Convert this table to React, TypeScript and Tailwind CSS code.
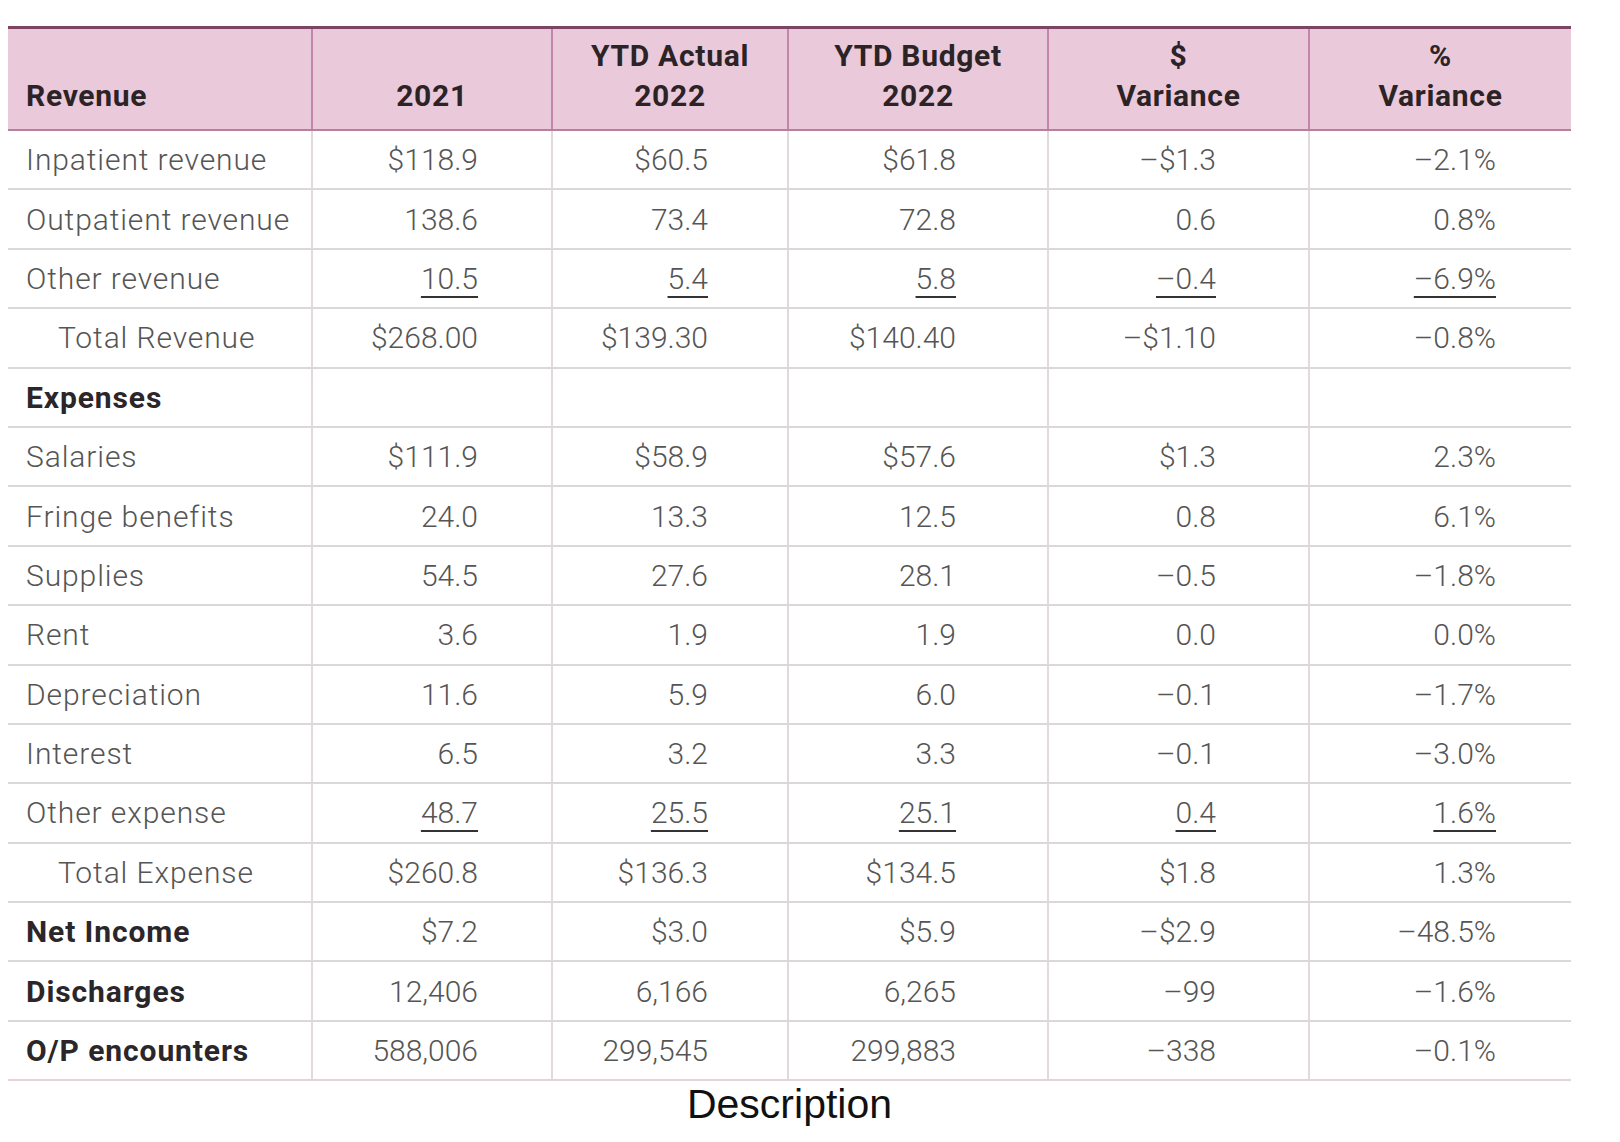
import React from "react";

type Row = {
  label: string;
  kind?: "bold" | "indent";
  vals: string[];
  underline?: boolean;
};

const rows: Row[] = [
  { label: "Inpatient revenue", vals: ["$118.9", "$60.5", "$61.8", "\u2013$1.3", "\u20132.1%"] },
  { label: "Outpatient revenue", vals: ["138.6", "73.4", "72.8", "0.6", "0.8%"] },
  { label: "Other revenue", vals: ["10.5", "5.4", "5.8", "\u20130.4", "\u20136.9%"], underline: true },
  { label: "Total Revenue", kind: "indent", vals: ["$268.00", "$139.30", "$140.40", "\u2013$1.10", "\u20130.8%"] },
  { label: "Expenses", kind: "bold", vals: ["", "", "", "", ""] },
  { label: "Salaries", vals: ["$111.9", "$58.9", "$57.6", "$1.3", "2.3%"] },
  { label: "Fringe benefits", vals: ["24.0", "13.3", "12.5", "0.8", "6.1%"] },
  { label: "Supplies", vals: ["54.5", "27.6", "28.1", "\u20130.5", "\u20131.8%"] },
  { label: "Rent", vals: ["3.6", "1.9", "1.9", "0.0", "0.0%"] },
  { label: "Depreciation", vals: ["11.6", "5.9", "6.0", "\u20130.1", "\u20131.7%"] },
  { label: "Interest", vals: ["6.5", "3.2", "3.3", "\u20130.1", "\u20133.0%"] },
  { label: "Other expense", vals: ["48.7", "25.5", "25.1", "0.4", "1.6%"], underline: true },
  { label: "Total Expense", kind: "indent", vals: ["$260.8", "$136.3", "$134.5", "$1.8", "1.3%"] },
  { label: "Net Income", kind: "bold", vals: ["$7.2", "$3.0", "$5.9", "\u2013$2.9", "\u201348.5%"] },
  { label: "Discharges", kind: "bold", vals: ["12,406", "6,166", "6,265", "\u201399", "\u20131.6%"] },
  { label: "O/P encounters", kind: "bold", vals: ["588,006", "299,545", "299,883", "\u2013338", "\u20130.1%"] },
];

const colW = ["w-[240px]", "w-[236px]", "w-[260px]", "w-[261px]", "w-[261px]"];
const colPr = ["pr-[73px]", "pr-[79px]", "pr-[91px]", "pr-[92px]", "pr-[75px]"];

export default function App() {
  return (
    <div
      className="w-[1620px] h-[1142px] bg-white pt-[26px] pl-[8px]"
      style={{ fontFamily: "Roboto, 'Noto Sans', sans-serif" }}
    >
      <div className="w-[1563px]">
        {/* Header */}
        <div className="flex h-[105px] bg-[#e9c9da] border-t-[3px] border-t-[#7d4563] border-b-2 border-b-[#b9809e] text-[#2b2326] font-bold text-[30px] leading-[40px] tracking-[0.7px]">
          <div className="w-[305px] flex items-end pl-[18px] pb-[13px] border-r-2 border-r-[#c486a6]">
            Revenue
          </div>
          {[
            ["", "2021"],
            ["YTD Actual", "2022"],
            ["YTD Budget", "2022"],
            ["$", "Variance"],
            ["%", "Variance"],
          ].map((h, i) => (
            <div
              key={i}
              className={`${colW[i]} flex flex-col items-center justify-end pb-[13px] ${
                i < 4 ? "border-r-2 border-r-[#c486a6]" : ""
              }`}
            >
              {h[0] && <div>{h[0]}</div>}
              <div>{h[1]}</div>
            </div>
          ))}
        </div>
        {/* Body */}
        {rows.map((r, ri) => (
          <div
            key={ri}
            className={`flex h-[59.4px] border-b-2 ${
              ri === rows.length - 1 ? "border-b-[#e6d2dc]" : "border-b-[#dcd7da]"
            } text-[30px]`}
          >
            <div
              className={`w-[305px] flex items-center border-r-2 border-r-[#e0dadd] tracking-[0.9px] ${
                r.kind === "indent" ? "pl-[50px]" : "pl-[18px]"
              } ${
                r.kind === "bold"
                  ? "font-bold text-[#2b2629]"
                  : "font-light text-[#555555]"
              }`}
            >
              {r.label}
            </div>
            {r.vals.map((v, i) => (
              <div
                key={i}
                className={`${colW[i]} ${colPr[i]} flex items-center justify-end font-light text-[#555555] ${
                  i < 4 ? "border-r-2 border-r-[#e0dadd]" : ""
                }`}
              >
                <span
                  className={
                    r.underline
                      ? "underline decoration-[1.5px] underline-offset-[7px] decoration-[#333]"
                      : ""
                  }
                >
                  {v}
                </span>
              </div>
            ))}
          </div>
        ))}
        <div
          className="text-center text-[41px] leading-[46px] text-[#111]"
          style={{ fontFamily: "'Liberation Sans', Arial, sans-serif" }}
        >
          Description
        </div>
      </div>
    </div>
  );
}
